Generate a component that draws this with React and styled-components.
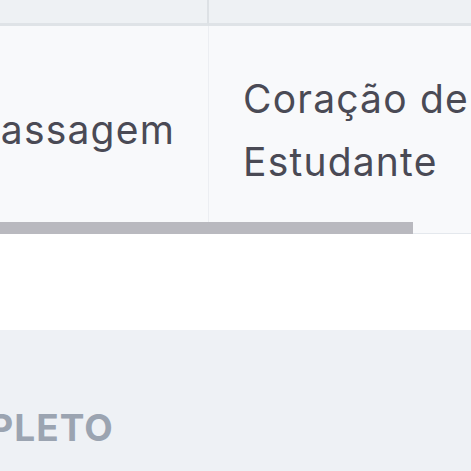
import React from 'react';
import styled, { createGlobalStyle } from 'styled-components';

const Global = createGlobalStyle`
    html, body {
        margin: 0;
        padding: 0;
        background: #ffffff;
        font-family: Inter, "Noto Sans", sans-serif;
        overflow: hidden;
    }
`

const Page = styled.div`
    width: 471px;
    height: 471px;
    overflow: hidden;
    display: flex;
    flex-direction: column;
`

const TableWrap = styled.div`
    position: relative;
    overflow: hidden;
`

const Table = styled.div`
    display: grid;
    grid-template-columns: 273px 300px;
    margin-left: -64px;
`

const HeadCell = styled.div`
    height: 23px;
    background: #eef1f4;
    border-bottom: 3px solid #dfe3e7;
    border-right: ${props => props.last ? 'none' : '2px solid #dde1e5'};
`

const Cell = styled.div`
    height: 207px;
    background: #f8f9fb;
    border-bottom: 1px solid #e4e8ed;
    border-right: ${props => props.last ? 'none' : '1px solid #eceef2'};
    padding: ${props => props.end ? '0 33px 0 0' : '0 0 0 34px'};
    display: flex;
    align-items: center;
    justify-content: ${props => props.end ? 'flex-end' : 'flex-start'};
    font-size: 39px;
    line-height: 63px;
    letter-spacing: 1.2px;
    color: #4a4a55;
    white-space: ${props => props.nowrap ? 'nowrap' : 'normal'};
    overflow: hidden;
`

const Thumb = styled.div`
    position: absolute;
    left: 0;
    bottom: 0;
    width: 413px;
    height: 12px;
    background: #b9b9bf;
`

const Spacer = styled.div`
    height: 96px;
    background: #ffffff;
`

const Section = styled.div`
    flex: 1;
    background: #eef1f5;
    padding-top: 75px;
`

const SectionTitle = styled.h2`
    margin: 0 0 0 -104px;
    font-size: 37px;
    font-weight: 700;
    letter-spacing: 1px;
    text-transform: uppercase;
    color: #9ba4b1;
    white-space: nowrap;
`

export default function App() {
    return (
        <Page>
            <Global />
            <TableWrap>
                <Table>
                    <HeadCell />
                    <HeadCell last />
                    <Cell end nowrap>Passagem</Cell>
                    <Cell last>Coração de Estudante</Cell>
                </Table>
                <Thumb />
            </TableWrap>
            <Spacer />
            <Section>
                <SectionTitle>Completo</SectionTitle>
            </Section>
        </Page>
    );
}
